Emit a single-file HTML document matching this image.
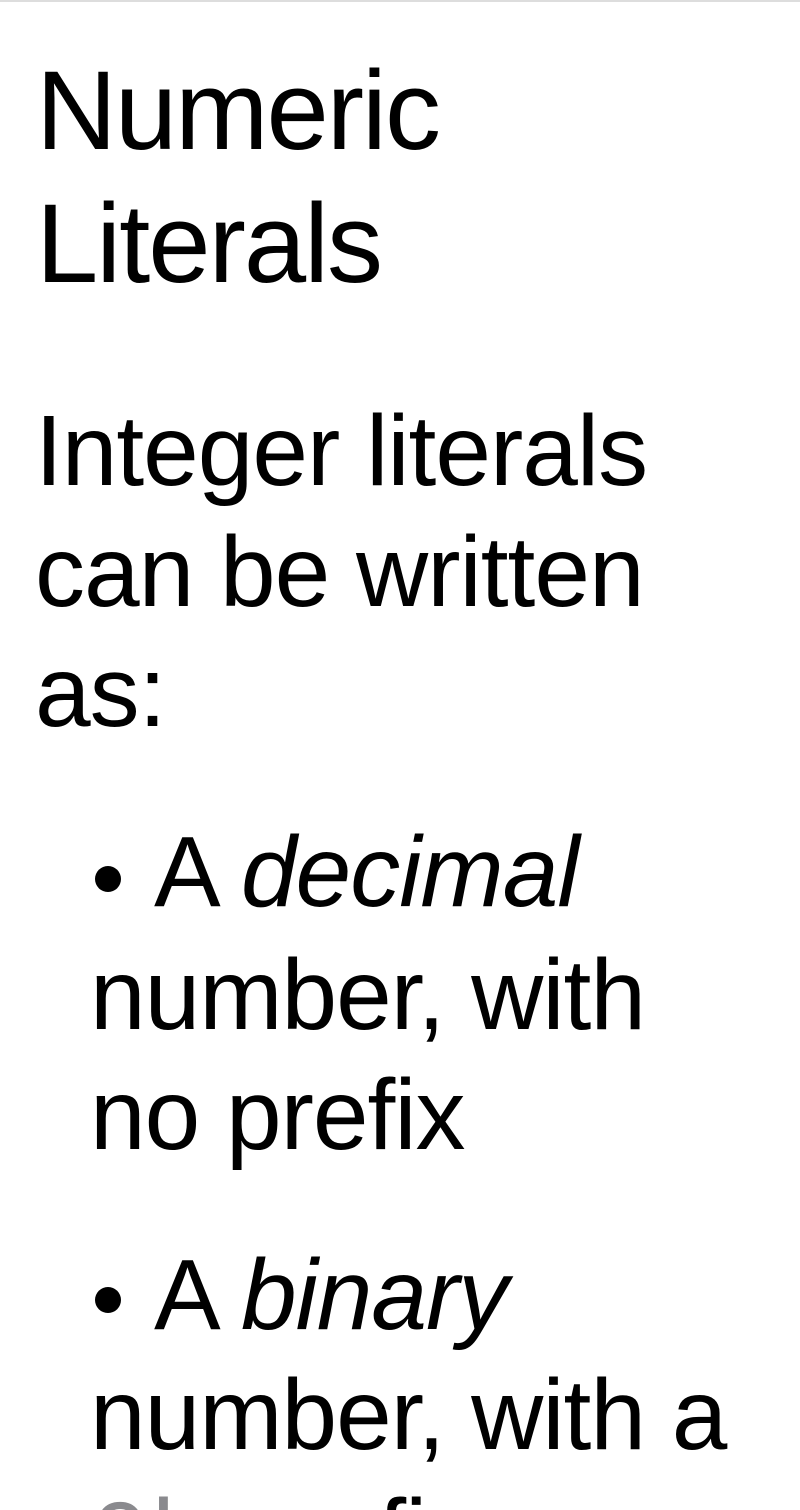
<!DOCTYPE html>
<html><head><meta charset="utf-8"><style>
html,body{margin:0;padding:0;background:#fff;width:800px;height:1510px;overflow:hidden;position:relative}
.topbar{position:absolute;left:0;top:0;width:800px;height:2px;background:#ddd}
.l{position:absolute;white-space:nowrap;font-family:"Liberation Sans",sans-serif;color:#000}
.h{font-size:112px;line-height:112px;letter-spacing:-2px}
.b{font-size:100px;line-height:100px;letter-spacing:-1px}
i{font-style:italic}
.dot{position:absolute;width:26px;height:26px;border-radius:50%;background:#000}
.code{font-family:"Liberation Mono",monospace;color:#8a8a8e;letter-spacing:0}
</style></head><body>
<div class="topbar"></div>
<div class="l h" style="left:36px;top:55px">Numeric</div>
<div class="l h" style="left:36px;top:188px">Literals</div>

<div class="l b" style="left:35px;top:401px">Integer literals</div>
<div class="l b" style="left:35px;top:522px">can be written</div>
<div class="l b" style="left:35px;top:642px">as:</div>

<div class="dot" style="left:95px;top:866px"></div>
<div class="l b" style="left:154px;top:822px">A <i>decimal</i></div>
<div class="l b" style="left:90px;top:945px">number, with</div>
<div class="l b" style="left:90px;top:1065px">no prefix</div>

<div class="dot" style="left:95px;top:1287px"></div>
<div class="l b" style="left:154px;top:1245px">A <i>binary</i></div>
<div class="l b" style="left:90px;top:1365px">number, with a</div>
<div class="l b" style="left:90px;top:1485px"><span class="code">0b</span> prefix</div>
</body></html>
